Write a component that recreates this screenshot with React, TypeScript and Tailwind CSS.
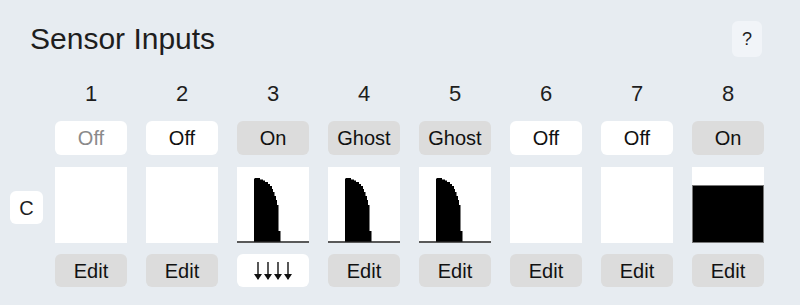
import React from 'react';

type Mode = 'Off' | 'On' | 'Ghost';
type Trace = 'none' | 'peak' | 'full';

interface Sensor {
  id: number;
  mode: Mode;
  disabled?: boolean;
  trace: Trace;
  live?: boolean;
}

const sensors: Sensor[] = [
  { id: 1, mode: 'Off', disabled: true, trace: 'none' },
  { id: 2, mode: 'Off', trace: 'none' },
  { id: 3, mode: 'On', trace: 'peak', live: true },
  { id: 4, mode: 'Ghost', trace: 'peak' },
  { id: 5, mode: 'Ghost', trace: 'peak' },
  { id: 6, mode: 'Off', trace: 'none' },
  { id: 7, mode: 'Off', trace: 'none' },
  { id: 8, mode: 'On', trace: 'full' },
];

// stepped outline of a single pulse, box is 72x76
const peakPath =
  'M17,75 L17,12 L18,11 L23,11 L23,12.5 L26,12.5 L26,13.5 L28,13.5 L28,15 L31,15 L31,17 L33,17 L33,19 L35,19 L35,22 L36,22 L36,25 L37.5,25 L37.5,29 L39,29 L39,33 L40,33 L40,38 L41.5,38 L41.5,64 L43.5,64 L43.5,75 Z';

function TracePlot({ trace }: { trace: Trace }) {
  return (
    <div className="h-[76px] w-full bg-white">
      {trace === 'peak' && (
        <svg width="100%" height="76" viewBox="0 0 72 76" preserveAspectRatio="none">
          <path d={peakPath} fill="#000" />
          <line x1="0" y1="75" x2="72" y2="75" stroke="#222" strokeWidth="1.5" />
        </svg>
      )}
      {trace === 'full' && (
        <svg width="100%" height="76" viewBox="0 0 72 76" preserveAspectRatio="none">
          <rect x="0.5" y="18.5" width="71" height="57" fill="#000" stroke="#777" strokeWidth="1" />
        </svg>
      )}
    </div>
  );
}

function DownArrows() {
  return (
    <svg width="40" height="20" viewBox="0 0 40 20" fill="none" stroke="#111" strokeWidth="1.4">
      {[0, 1, 2, 3].map(i => {
        const x = 5 + i * 10;
        return (
          <g key={i}>
            <line x1={x} y1="1" x2={x} y2="18" />
            <path d={`M${x - 4},13 L${x},19 L${x + 4},13`} fill="#111" stroke="none" />
          </g>
        );
      })}
    </svg>
  );
}

export default function App() {
  const btn = 'flex items-center justify-center rounded-md text-[20px] leading-none';

  return (
    <div
      className="h-[305px] w-[800px] bg-[#e7ecf1] text-[#1e1e1e]"
      style={{ fontFamily: '"Liberation Sans", Arial, sans-serif' }}
    >
      <div className="flex items-start justify-between pl-[30px] pr-[38px] pt-[21px]">
        <h1 className="text-[30px] leading-[36px] font-normal">Sensor Inputs</h1>
        <button className="flex h-[36px] w-[30px] items-center justify-center rounded-md bg-[#f1f4f8] text-[18px]">
          ?
        </button>
      </div>

      <div className="mt-[23px] flex pl-[10px]">
        <div className="mr-[12px] flex w-[33px] flex-col">
          <div className="h-[28px]" />
          <div className="mt-[13px] h-[34px]" />
          <div className="mt-[12px] flex h-[76px] items-center">
            <div className="mt-[5px] flex h-[33px] w-[33px] items-center justify-center rounded-md bg-white text-[20px]">
              C
            </div>
          </div>
        </div>

        <div className="grid grid-cols-[repeat(8,72px)] gap-x-[19px]">
          {sensors.map(s => (
            <div key={s.id} className="flex flex-col">
              <div className="h-[28px] text-center text-[22px] leading-[28px]">{s.id}</div>
              <div
                className={`${btn} mt-[13px] h-[34px] ${
                  s.mode === 'Off' ? 'bg-white' : 'bg-[#dcdcdc]'
                } ${s.disabled ? 'text-[#8a8a8a]' : 'text-[#111]'}`}
              >
                {s.mode}
              </div>
              <div className="mt-[12px]">
                <TracePlot trace={s.trace} />
              </div>
              <div
                className={`${btn} mt-[11px] h-[33px] ${
                  s.live ? 'bg-white' : 'bg-[#dcdcdc]'
                } text-[#111]`}
              >
                {s.live ? <DownArrows /> : 'Edit'}
              </div>
            </div>
          ))}
        </div>
      </div>
    </div>
  );
}
